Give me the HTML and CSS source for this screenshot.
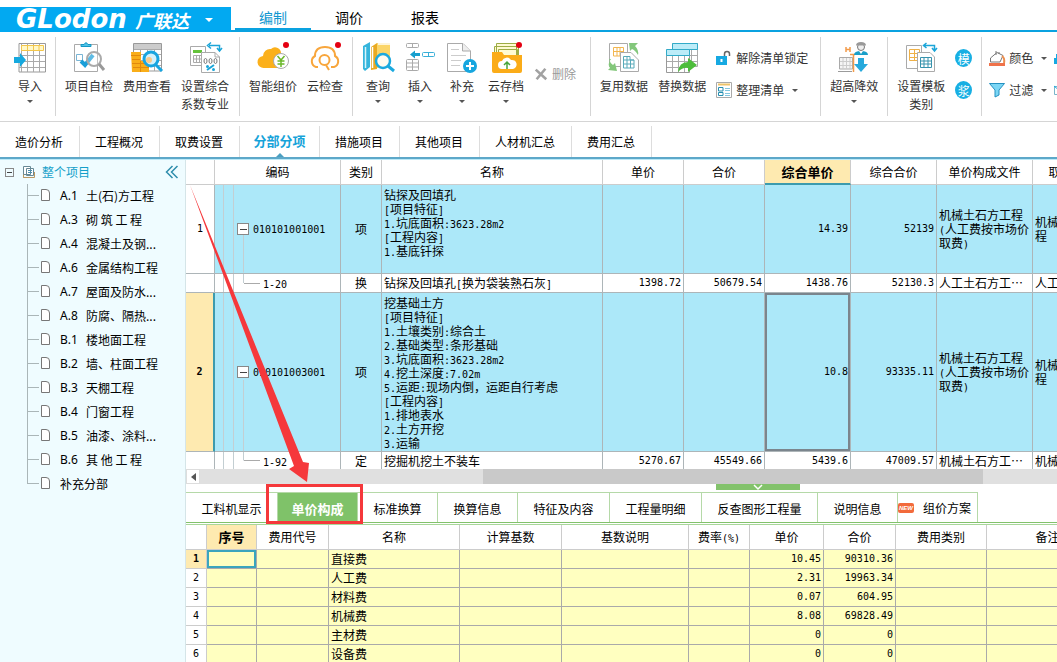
FILE: index.html
```html
<!DOCTYPE html>
<html lang="zh-CN">
<head>
<meta charset="utf-8">
<title>广联达计价</title>
<link rel="stylesheet" href="styles.css">
</head>
<body>
<header class="titlebar">
  <button class="brand"><span class="brand-en">GLodon</span><span class="brand-cn">广联达</span><i class="caret light"></i></button>
  <nav class="menus">
    <a class="menu active" href="#edit">编制</a>
    <a class="menu" href="#adjust">调价</a>
    <a class="menu" href="#report">报表</a>
  </nav>
</header>

<div class="ribbon">
  <div class="group first">
    <button class="tool">
      <svg viewBox="0 0 32 32"><path d="M5 2.500H31.500V31H5Z" fill="#fff" stroke="#999"/><path d="M7.500 3V31M13.500 3V31M19.500 3V31M25.500 3V31M5 14.500H31M5 20.500H31M5 26.500H31" stroke="#aaa" fill="none"/><path d="M7.500 4.500H29.500V9.500H7.500ZM13.500 4.500V9.500M19.500 4.500V9.500M25 4.500V9.500" fill="#fff8c8" stroke="#f3c64a"/><path d="M0 16h6v-4l6 7-6 7v-4H0z" fill="#16a9df"/></svg>
      <span>导入</span><i class="caret"></i></button>
  </div>
  <div class="group roomy">
    <button class="tool">
      <svg viewBox="0 0 32 32"><path d="M1.500 3.500H24.500V30.500H1.500Z" fill="#fff" stroke="#aaa"/><path d="M8 5.500V3.500H11Q13 0 15 3.500H18V5.500Z" fill="#4ec3e8" stroke="#1497c4"/><path d="M3.500 13.500H9.500V19.500H3.500Z" fill="none" stroke="#79b5d5"/><path d="M8 20l4 4 8-10" fill="none" stroke="#199ed8" stroke-width="4"/><circle cx="21" cy="18" r="7" fill="#fff" fill-opacity=".3" stroke="#aaa" stroke-width="2"/><path d="M26 23l5 6" stroke="#999" stroke-width="3"/></svg>
      <span>项目自检</span></button>
    <button class="tool">
      <svg viewBox="0 0 32 32"><path d="M2.500 2.500H30.500V30H2.500Z" fill="#fff" stroke="#999"/><path d="M3 3H30V8H3Z" fill="#ccc"/><path d="M3 8.500H30M3 13.500H30M3 19.500H30M3 24.500H30M9.500 8V30M16.500 8V30M23.500 8V30" stroke="#aaa"/><path d="M0 11h10v9h8v11H1z" fill="#f9ae19"/><path d="M0 14.500H10M1 18.500H9M1 22.500H17M2 26.500H18M9.500 20V31" stroke="#e1890d"/><circle cx="20" cy="18" r="7" fill="#d4f1fb" stroke="#18a5e0" stroke-width="3"/><circle cx="18" cy="19" r="3" fill="#f7c98c"/><path d="M25 24l6 6" stroke="#18a5e0" stroke-width="3"/></svg>
      <span>费用查看</span></button>
    <button class="tool">
      <svg viewBox="0 0 32 32"><path d="M1.500 5.500H16.500V24.500H1.500Z" fill="#fff" stroke="#aaa"/><path d="M4 9H13V12H4Z" fill="#64c33b"/><path d="M4.500 14.500H13.500V21.500H4.500ZM4.500 18H13.500M7.500 14.500V21.500M10.500 14.500V21.500" fill="none" stroke="#aaa"/><path d="M12.500 11.500H26L30.500 16V31.500H12.500Z" fill="#fff" stroke="#aaa"/><path d="M26 11.500V16H30.500" fill="none" stroke="#aaa"/><g fill="none" stroke="#777"><ellipse cx="16.500" cy="20" rx="1.500" ry="2.500"/><ellipse cx="21.500" cy="20" rx="1.500" ry="2.500"/><ellipse cx="26.500" cy="20" rx="1.500" ry="2.500"/></g><path d="M18 29l7-5" stroke="#1ba5d8" stroke-width="2"/><circle cx="18.500" cy="25.500" r="1.500" fill="#1ba5d8"/><circle cx="24.500" cy="28.500" r="1.500" fill="#1ba5d8"/><path d="M20 4.500H30.500V9M22 1.500L18.500 4.500L22 7.500M28 7L30.500 10L33 7" fill="none" stroke="#1ba5d8" stroke-width="1.500"/></svg>
      <span>设置综合<br>系数专业</span></button>
  </div>
  <div class="group">
    <button class="tool">
      <svg viewBox="0 0 32 32"><path d="M7 27a6 6 0 0 1-1-12 7 7 0 0 1 8-7 6 6 0 0 1 10 5 8 8 0 0 1 3 14z" fill="#fbb01b"/><circle cx="24" cy="20" r="7.500" fill="#fff" stroke="#aaa"/><path d="M20.500 15l3.500 4 3.500-4M24 19v7M20.500 20h7M20.500 23h7" fill="none" stroke="#6bb82b" stroke-width="1.500"/><circle cx="29" cy="4" r="3" fill="#e40012"/></svg>
      <span>智能组价</span></button>
    <button class="tool">
      <svg viewBox="0 0 32 32"><path d="M9 26H7a6 6 0 0 1-1-11c0-6 4-9 10-9s10 3 10 9a6 6 0 0 1-1 11h-3" fill="none" stroke="#f8a63c" stroke-width="2"/><circle cx="15.500" cy="19" r="5" fill="none" stroke="#f8a63c" stroke-width="2"/><path d="M17 24l3 5" stroke="#f8a63c" stroke-width="2"/><circle cx="29" cy="4" r="3" fill="#e40012"/></svg>
      <span>云检查</span></button>
  </div>
  <div class="group">
    <button class="tool">
      <svg viewBox="0 0 32 32"><path d="M1 5L8 1V26L3 30L1 28Z" fill="#35b5dc"/><path d="M3.500 6V27" stroke="#d7f5fc" stroke-width="1.500"/><path d="M9 6L15 2V28L9 29Z" fill="#e9aa22"/><path d="M15 2H28V27H15Z" fill="#fbd568"/><path d="M10.500 6V27M16 3H28" stroke="#fff" stroke-width="1.500"/><circle cx="21" cy="20" r="7" fill="#fff" fill-opacity=".9" stroke="#1ba9df" stroke-width="2.500"/><path d="M26 25l6 5" stroke="#1ba9df" stroke-width="3"/></svg>
      <span>查询</span><i class="caret"></i></button>
    <button class="tool">
      <svg viewBox="0 0 32 32"><g fill="#fff" stroke="#aaa"><rect x="2.500" y="2.500" width="12" height="4" rx="1"/><path d="M8.500 2.500V6.500"/><rect x="2.500" y="18.500" width="12" height="11" rx="1"/><path d="M8.500 18.500V29.500M2.500 22H14.500M2.500 26H14.500"/></g><rect x="18.500" y="11.500" width="12" height="4" rx="1" fill="#fff" stroke="#39afd8"/><path d="M24.500 11V16" stroke="#39afd8"/><path d="M6 13.500l5-4v2.500h5v3h-5v2.500z" fill="#169fce"/></svg>
      <span>插入</span><i class="caret"></i></button>
    <button class="tool">
      <svg viewBox="0 0 32 32"><path d="M1.500 2.500H17L24.500 10V30.500H1.500Z" fill="#fff" stroke="#aaa"/><path d="M16.500 2.500V10H24.500" fill="#eee" stroke="#aaa"/><path d="M5 8.500H13M5 14.500H20M5 19.500H15M5 24.500H14" stroke="#ccc"/><circle cx="24" cy="25" r="7" fill="#16a6df"/><path d="M20 25H28M24 21V29" stroke="#fff" stroke-width="2"/></svg>
      <span>补充</span><i class="caret"></i></button>
    <button class="tool">
      <svg viewBox="0 0 32 32"><path d="M6.500 18V2.500H26.500V18M4.500 18V5.500H28.500V18M8.500 18V8.500H27.500V18" fill="#fffad2" stroke="#9dac45"/><path d="M2 11H12L14 14H32V30Q32 32 30 32H4Q2 32 2 30Z" fill="#fbac18"/><path d="M12 28a4 4 0 0 1 0-8 5 5 0 0 1 9-1 4 4 0 0 1 2 9z" fill="#fff"/><path d="M17 28V21M14 24l3-3 3 3" fill="none" stroke="#48a53b" stroke-width="1.500"/><circle cx="29" cy="4" r="3" fill="#e40012"/></svg>
      <span>云存档</span><i class="caret"></i></button>
    <button class="line disabled" disabled>
      <svg viewBox="0 0 16 16"><path d="M2 3l12 11M13 2L3 14" stroke="#a2a2a2" stroke-width="3"/></svg><span>删除</span></button>
  </div>
  <div class="group wide">
    <button class="tool">
      <svg viewBox="0 0 32 32"><path d="M1.500 2.500H19.500V25.500H1.500Z" fill="#fff" stroke="#aaa"/><path d="M5.500 6.500H15.500V15H5.500ZM5.500 10.500H15.500M9 6.500V15M12 6.500V15" fill="none" stroke="#f2b64f"/><path d="M12.500 11.500H23L30.500 19V30.500H12.500Z" fill="#fff" stroke="#aaa"/><path d="M15.500 15.500H22V19H26V27H15.500ZM15.500 19H26M15.500 23H26M19 15.500V27M22.500 19V27" fill="none" stroke="#59aab9"/><path d="M21 2h9l-3 3q4 4 3 9-3-5-6-6l-2 2zM1 18q1 4 4 6l2-2 2 8-9-1 2-2q-3-4 1-9" fill="#83c77b"/></svg>
      <span>复用数据</span></button>
    <button class="tool">
      <svg viewBox="0 0 32 32"><path d="M6.500 2.500H31.500V25.500H6.500Z" fill="#fff" stroke="#aaa"/><path d="M25.500 8V26M19.500 8V26M8 14.500H31M8 20.500H31" stroke="#aaa"/><path d="M6.500 2.500H31.500V8.500H6.500Z" fill="#bcecf8" stroke="#32abc8"/><path d="M.500 9H23.500V31.500H.500Z" fill="#fff" stroke="#999"/><path d="M6.500 14V31M12.500 14V31M18.500 14V31M1 20.500H24M1 26.500H24" stroke="#aaa"/><path d="M.500 8.500H23.500V14.500H.500Z" fill="#bcecf8" stroke="#32abc8"/><path d="M12 31q1-10 10-10v-4l9 7-9 7v-4q-5-1-10 4z" fill="#4dbd3b"/></svg>
      <span>替换数据</span></button>
    <div class="stack">
      <button class="line"><svg viewBox="0 0 16 16"><path d="M0 6h11v9H0z" fill="#16a9e2"/><path d="M8.500 6V4q0-2.500 2.500-2.500T13.500 4v2" fill="none" stroke="#666" stroke-width="1.500"/><path d="M5.500 9v3" stroke="#fff" stroke-width="2"/></svg><span>解除清单锁定</span></button>
      <button class="line"><svg viewBox="0 0 16 16"><path d="M.500.500H15.500V15.500H.500Z" fill="#fff" stroke="#aaa"/><path d="M2 2.500H14" stroke="#edc36a" stroke-width="2"/><path d="M2.500 5.500H7V9H2.500ZM2.500 10.500H7V13.500H2.500Z" fill="#fff" stroke="#278eb0"/><path d="M9 6.500H14M9 8.500H14M9 11.500H14M9 13.500H14" stroke="#82c6df"/></svg><span>整理清单</span><i class="caret beside"></i></button>
    </div>
  </div>
  <div class="group">
    <button class="tool">
      <svg viewBox="0 0 32 32"><path d="M1.500 16.500H14.500V28H1.500Z" fill="#f5f5f5" stroke="#aaa"/><path d="M5 17V28M8.500 17V28M12 17V28M2 20.500H14M2 24.500H14" stroke="#ccc"/><path d="M0 30.500H14" stroke="#9b9b9b"/><path d="M8 6V11M12 6V11M8 8.500H12M12 13.500H17M15.500 13V31" fill="none" stroke="#f29b4a" stroke-width="1.500"/><circle cx="23" cy="6" r="3.500" fill="#eee" stroke="#777"/><path d="M18 4.500Q18 1 23 1T28 4.500Z" fill="#999"/><path d="M16 14q0-4 7-4t7 4z" fill="#199fc9"/><path d="M21 10l2 3 2-3" fill="#fff"/><path d="M20 17h6v6h4l-7 8-7-8h4z" fill="#26a9dc"/></svg>
      <span>超高降效</span><i class="caret"></i></button>
  </div>
  <div class="group">
    <button class="tool">
      <svg viewBox="0 0 32 32"><path d="M1.500 4.500H16.500V27.500H1.500Z" fill="#fff" stroke="#aaa"/><path d="M4.500 8.500H14.500V19.500H4.500ZM4.500 12.500H14M4.500 16.500H14M9.500 8.500V19.500" fill="none" stroke="#efb148"/><path d="M12.500 11.500H25L29.500 16V30.500H12.500Z" fill="#fff" stroke="#aaa"/><path d="M15.500 16.500H26.500V26.500H15.500ZM15.500 20H26.500M15.500 23H26.500M19 16.500V26.500M23 16.500V26.500" fill="none" stroke="#3793ad"/><path d="M19 4.500H29.500V9M21.500 2L18.500 4.500L21.500 7M27 7L29.500 10L32 7" fill="none" stroke="#1ba5d8" stroke-width="1.500"/></svg>
      <span>设置模板<br>类别</span></button>
    <div class="stack"><button class="round">模</button><button class="round">浆</button></div>
  </div>
  <div class="group last">
    <div class="stack">
      <button class="line"><svg viewBox="0 0 16 16"><path d="M1.500 12V8L8 2.500L14 5.500L11 12Z" fill="#fff" stroke="#777"/><path d="M7 5V1M10 4V2" stroke="#777"/><path d="M13 6q3 2 2 7" fill="none" stroke="#ec8d4d" stroke-width="2"/><path d="M0 13H16V16H0Z" fill="#ef724a"/></svg><span>颜色</span><i class="caret beside"></i></button>
      <button class="line"><svg viewBox="0 0 16 16"><path d="M.500 1.500H15.500L10 8V13L6 15V8Z" fill="#7bd6f5" stroke="#2591c1"/></svg><span>过滤</span><i class="caret beside"></i></button>
    </div>
    <div class="stack">
      <button class="line" aria-label="查找"><svg viewBox="0 0 16 16"><path d="M0 8h2V4h10v10H0z" fill="#16a9e2"/></svg></button>
      <button class="line" aria-label="其他"><svg viewBox="0 0 16 16"><path d="M.500 4.500H15.500V12.500H.500Z" fill="#fff" stroke="#7bb5ca"/><path d="M0 4l6 5" stroke="#16a9e2"/></svg></button>
    </div>
  </div>
</div>

<nav class="tabs">
  <a href="#t1">造价分析</a><a href="#t2">工程概况</a><a href="#t3">取费设置</a><a class="active" href="#t4">分部分项</a><a href="#t5">措施项目</a><a href="#t6">其他项目</a><a href="#t7">人材机汇总</a><a href="#t8">费用汇总</a>
</nav>

<div class="work">
  <aside class="side">
    <div class="root">
      <button class="toggle" aria-label="折叠"></button>
      <svg class="root-icon" viewBox="0 0 14 14"><path d="M1.500 12.500V1.500H8.500V9.500H1.500M4.500 3.500H11.500V10.500H4.500Z" fill="#fff" stroke="#678995"/><path d="M6 5.500H10M6 7.500H10" stroke="#488fb0"/><path d="M1.500 9.500V12.500H12.500V7" fill="none" stroke="#bc9862"/></svg>
      <a href="#all">整个项目</a>
      <button class="fold" aria-label="收起"><svg viewBox="0 0 14 14"><path d="M7.500 1L1.500 7L7.500 13M12.500 1L6.500 7L12.500 13" fill="none" stroke="#2e8dac" stroke-width="1.500"/></svg></button>
    </div>
    <ul class="tree">
      <li><a href="#a1"><i class="doc"></i><b>A.1</b>土(石)方工程</a></li>
      <li><a href="#a3"><i class="doc"></i><b>A.3</b>砌 筑 工 程</a></li>
      <li><a href="#a4"><i class="doc"></i><b>A.4</b>混凝土及钢...</a></li>
      <li><a href="#a6"><i class="doc"></i><b>A.6</b>金属结构工程</a></li>
      <li><a href="#a7"><i class="doc"></i><b>A.7</b>屋面及防水...</a></li>
      <li><a href="#a8"><i class="doc"></i><b>A.8</b>防腐、隔热...</a></li>
      <li><a href="#b1"><i class="doc"></i><b>B.1</b>楼地面工程</a></li>
      <li><a href="#b2"><i class="doc"></i><b>B.2</b>墙、柱面工程</a></li>
      <li><a href="#b3"><i class="doc"></i><b>B.3</b>天棚工程</a></li>
      <li><a href="#b4"><i class="doc"></i><b>B.4</b>门窗工程</a></li>
      <li><a href="#b5"><i class="doc"></i><b>B.5</b>油漆、涂料...</a></li>
      <li><a href="#b6"><i class="doc"></i><b>B.6</b>其 他 工 程</a></li>
      <li><a href="#bc"><i class="doc"></i>补充分部</a></li>
    </ul>
  </aside>

  <main class="main">
    <div class="clip">
    <table class="grid bill">
      <colgroup><col class="w29"><col class="w126"><col class="w41"><col class="w221"><col class="w81"><col class="w81"><col class="w86"><col class="w86"><col class="w96"><col class="w80"></colgroup>
      <thead><tr><th></th><th>编码</th><th>类别</th><th>名称</th><th>单价</th><th>合价</th><th class="hot">综合单价</th><th>综合合价</th><th>单价构成文件</th><th>取费专业</th></tr></thead>
      <tbody>
        <tr class="item one"><td class="no">1</td><td class="code"><div><button class="toggle" aria-label="折叠"></button><span class="n">010101001001</span></div></td><td class="mid">项</td>
          <td class="desc">钻探及回填孔<br><span class="n">[</span>项目特征<span class="n">]</span><br><span class="n">1.</span>坑底面积<span class="n">:3623.28m2</span><br><span class="n">[</span>工程内容<span class="n">]</span><br><span class="n">1.</span>基底钎探</td>
          <td class="num"></td><td class="num"></td><td class="num">14.39</td><td class="num">52139</td><td>机械土石方工程<br><span class="n">(</span>人工费按市场价<br>取费<span class="n">)</span></td><td>机械土石方工<br>程</td></tr>
        <tr class="sub"><td class="no"></td><td class="leaf"><span class="n">1-20</span></td><td class="mid">换</td><td>钻探及回填孔<span class="n">[</span>换为袋装熟石灰<span class="n">]</span></td><td class="num">1398.72</td><td class="num">50679.54</td><td class="num">1438.76</td><td class="num">52130.3</td><td>人工土石方工⋯</td><td>人工土石⋯</td></tr>
        <tr class="item two"><td class="no current">2</td><td class="code"><div><button class="toggle" aria-label="折叠"></button><span class="n">010101003001</span></div></td><td class="mid">项</td>
          <td class="desc">挖基础土方<br><span class="n">[</span>项目特征<span class="n">]</span><br><span class="n">1.</span>土壤类别<span class="n">:</span>综合土<br><span class="n">2.</span>基础类型<span class="n">:</span>条形基础<br><span class="n">3.</span>坑底面积<span class="n">:3623.28m2</span><br><span class="n">4.</span>挖土深度<span class="n">:7.02m</span><br><span class="n">5.</span>运距<span class="n">:</span>现场内倒，运距自行考虑<br><span class="n">[</span>工程内容<span class="n">]</span><br><span class="n">1.</span>排地表水<br><span class="n">2.</span>土方开挖<br><span class="n">3.</span>运输</td>
          <td class="num"></td><td class="num"></td><td class="num picked">10.8</td><td class="num">93335.11</td><td>机械土石方工程<br><span class="n">(</span>人工费按市场价<br>取费<span class="n">)</span></td><td>机械土石方工<br>程</td></tr>
        <tr class="sub end"><td class="no"></td><td class="leaf"><span class="n">1-92</span></td><td class="mid">定</td><td>挖掘机挖土不装车</td><td class="num">5270.67</td><td class="num">45549.66</td><td class="num">5439.6</td><td class="num">47009.57</td><td>机械土石方工⋯</td><td>机械土石⋯</td></tr>
      </tbody>
    </table>
    </div>
    <div class="scroll"><button class="scroll-left" aria-label="向左"></button><span class="before"></span><span class="thumb"></span><span class="after"></span></div>
    <div class="split"><button class="handle" aria-label="收起下方面板"><svg viewBox="0 0 12 6"><path d="M2 1L6 5L10 1" fill="none" stroke="#fff" stroke-width="1.500"/></svg></button></div>
    <nav class="subtabs">
      <a class="mid-tab" href="#s1">工料机显示</a><a class="active" href="#s2">单价构成</a><a href="#s3">标准换算</a><a href="#s4">换算信息</a><a class="mid-tab" href="#s5">特征及内容</a><a class="mid-tab" href="#s6">工程量明细</a><a class="long-tab" href="#s7">反查图形工程量</a><a href="#s8">说明信息</a><a class="new-tab" href="#s9"><em>NEW</em>组价方案</a>
    </nav>
    <div class="clip lower">
    <table class="grid fees">
      <colgroup><col class="w21"><col class="w50"><col class="w72"><col class="w131"><col class="w102"><col class="w127"><col class="w61"><col class="w74"><col class="w72"><col class="w91"><col class="w122"></colgroup>
      <thead><tr><th></th><th class="hot">序号</th><th>费用代号</th><th>名称</th><th>计算基数</th><th>基数说明</th><th>费率<span class="n">(%)</span></th><th>单价</th><th>合价</th><th>费用类别</th><th>备注</th></tr></thead>
      <tbody>
        <tr><td class="no current">1</td><td class="focus"></td><td></td><td>直接费</td><td></td><td></td><td></td><td class="num">10.45</td><td class="num">90310.36</td><td></td><td></td></tr>
        <tr><td class="no">2</td><td></td><td></td><td>人工费</td><td></td><td></td><td></td><td class="num">2.31</td><td class="num">19963.34</td><td></td><td></td></tr>
        <tr><td class="no">3</td><td></td><td></td><td>材料费</td><td></td><td></td><td></td><td class="num">0.07</td><td class="num">604.95</td><td></td><td></td></tr>
        <tr><td class="no">4</td><td></td><td></td><td>机械费</td><td></td><td></td><td></td><td class="num">8.08</td><td class="num">69828.49</td><td></td><td></td></tr>
        <tr><td class="no">5</td><td></td><td></td><td>主材费</td><td></td><td></td><td></td><td class="num">0</td><td class="num">0</td><td></td><td></td></tr>
        <tr><td class="no">6</td><td></td><td></td><td>设备费</td><td></td><td></td><td></td><td class="num">0</td><td class="num">0</td><td></td><td></td></tr>
      </tbody>
    </table>
    </div>
    <svg class="callout" viewBox="0 0 180 366" aria-hidden="true"><path d="M4 25L117 302L123 303L121 322L103 309L108 306Z" fill="#f5383b"/><rect x="81.500" y="325.500" width="94" height="37" fill="none" stroke="#f5383b" stroke-width="3"/></svg>
  </main>
</div>
</body>
</html>
```
FILE: styles.css
```css
* { box-sizing: border-box; }
body {
  margin: 0;
  height: 100vh;
  display: flex;
  flex-direction: column;
  overflow: hidden;
  background: #fff;
  color: #000;
  font: 12px/18px "Noto Sans CJK SC", "Noto Sans", sans-serif;
}
a { color: inherit; text-decoration: none; }
button { border: 0; padding: 0; background: none; color: inherit; font: inherit; }
svg { display: block; overflow: visible; flex: none; }

.titlebar {
  display: flex;
  flex: none;
  height: 32px;
  padding-top: 7px;
  background: linear-gradient(#0aa2e0, #0aa2e0) 0 100% / 100% 2px no-repeat;
}
.brand {
  display: flex;
  align-items: center;
  width: 231px;
  padding-left: 16px;
  background: #02a9f1;
  color: #fff;
  text-align: left;
  white-space: nowrap;
}
.brand-en { width: 119px; font: italic bold 26px/25px "DejaVu Sans", sans-serif; }
.brand-cn { width: 70px; font-size: 18px; font-weight: bold; font-style: italic; line-height: 24px; }
.menus { display: flex; padding-left: 4px; }
.menu { width: 76px; text-align: center; font-size: 14px; line-height: 21px; }
.menu.active { color: #1197d0; border-bottom: 4px solid #0aa2e0; }
.caret { display: block; width: 0; height: 0; border: 3px solid transparent; border-top-color: #555; border-bottom: 0; }
.caret.light { border-width: 4px; border-top-color: #fff; border-bottom: 0; }
.caret.beside { margin-left: 4px; }

.ribbon { display: flex; flex: none; height: 90px; padding: 5px 0; border-bottom: 1px solid #d5d5d5; overflow: hidden; color: #333; }
.group { display: flex; flex: none; gap: 10px; padding: 4px 9px 0; border-right: 1px solid #d5d5d5; }
.group.first { padding-left: 14px; }
.group.roomy { padding-right: 10px; }
.group.wide { padding-right: 12px; }
.group.last { gap: 7px; border-right: 0; padding-left: 7px; }
.tool { display: flex; flex-direction: column; align-items: center; min-width: 32px; white-space: nowrap; }
.tool svg { width: 32px; height: 32px; margin-bottom: 4px; }
.tool .caret { margin-top: 5px; }
.line { display: flex; align-items: center; gap: 4px; height: 18px; white-space: nowrap; }
.line svg { width: 16px; height: 16px; }
.disabled { margin-top: 24px; padding-right: 5px; color: #999; }
.disabled svg { width: 14px; height: 14px; }
.stack { display: flex; flex-direction: column; gap: 14px; padding-top: 8px; }
.round { width: 17px; height: 18px; border-radius: 50%; background: #18afe3; color: #fff; line-height: 17px; }

.tabs { display: flex; flex: none; height: 37px; padding-top: 4px; border-bottom: 2px solid #5da8c9; }
.tabs a { padding: 0 16px 0 15px; border-right: 1px solid #ddd; line-height: 32px; }
.tabs .active {
  display: flex;
  flex-direction: column;
  align-items: center;
  width: 80px;
  padding: 0;
  color: #16a3d9;
  font-size: 13px;
  font-weight: bold;
  line-height: 30px;
  white-space: nowrap;
}
.tabs .active::after { content: ""; margin-top: -3px; border: 4px solid transparent; border-top: 0; border-bottom-color: #4b9fc1; }

.work { display: flex; flex: 1; min-height: 0; border-top: 1px solid #bdeaf8; }
.side { flex: none; width: 186px; background: #effcff; border-right: 1px solid #d5e5e8; }
.root { display: flex; align-items: center; height: 24px; padding: 0 6px 0 5px; color: #149fc9; }
.toggle { flex: none; width: 9px; height: 9px; border: 1px solid #888; background: linear-gradient(#444, #444) 50% / 5px 1px no-repeat; }
.root-icon { width: 14px; height: 14px; margin: 0 6px 0 8px; }
.fold { margin-left: auto; }
.fold svg { width: 14px; height: 14px; }
.tree { margin: 0; padding: 0 0 0 27px; list-style: none; }
.tree li { background: linear-gradient(#aab6b8, #aab6b8) 0 0 / 1px 100% no-repeat, linear-gradient(#aab6b8, #aab6b8) 0 11px / 12px 1px no-repeat; }
.tree li:last-child { background-size: 1px 12px, 12px 1px; }
.tree a { display: flex; height: 24px; padding-left: 14px; line-height: 24px; white-space: pre; }
.tree b { width: 26px; font-weight: normal; font-family: "Noto Sans", sans-serif; }
.doc { width: 9px; height: 12px; margin: 5px 10px 0 0; border: 1px solid #777; border-top-right-radius: 4px; background: #fff; }

.main { position: relative; display: flex; flex-direction: column; flex: 1; min-width: 0; }
.clip { overflow: hidden; flex: none; }
.lower { flex: 1; min-height: 0; margin-top: 1px; border-top: 1px solid #a8d79a; }
.grid { table-layout: fixed; border-collapse: separate; border-spacing: 0; line-height: 14px; }
.bill { width: 927px; }
.fees { width: 923px; }
.w21 { width: 21px; } .w29 { width: 29px; } .w41 { width: 41px; } .w50 { width: 50px; }
.w61 { width: 61px; } .w72 { width: 72px; } .w74 { width: 74px; } .w80 { width: 80px; }
.w81 { width: 81px; } .w86 { width: 86px; } .w91 { width: 91px; } .w96 { width: 96px; }
.w102 { width: 102px; } .w122 { width: 122px; } .w126 { width: 126px; } .w127 { width: 127px; }
.w131 { width: 131px; } .w221 { width: 221px; }
.grid th, .grid td { padding: 0 2px; border: solid #adb5b8; border-width: 0 1px 1px 0; white-space: nowrap; overflow: hidden; }
.grid th { height: 25px; font-weight: normal; border-color: #ccc; }
.grid .hot { background: #feeab0; font-weight: bold; font-size: 13px; }
.bill .hot { border-bottom: 2px solid #3c9bae; }
.n, .num { font-family: "DejaVu Sans Mono", monospace; font-size: 10px; }
.n { line-height: 1px; }
.num { line-height: 12px; }
.grid .num { text-align: right; padding-right: 2px; }
.grid .mid, .grid .no { text-align: center; }
.no { background: #fff; font-family: "DejaVu Sans Mono", monospace; font-size: 10px; }
.item td { background-color: #ace8f9; }
.item .no { background: #fff; }
.grid .no.current { background: #feeab0; font-weight: bold; }
.bill .current { border-right: 2px solid #3c9bae; }
.item .desc { vertical-align: top; padding-top: 3px; }
.one td { height: 89px; }
.two td { height: 159px; }
.sub td { height: 19px; }
.end td { height: 17px; border-bottom: 0; }
.code, .leaf { background-image: linear-gradient(#c3ced2, #c3ced2), linear-gradient(#c3ced2, #c3ced2), linear-gradient(#c3ced2, #c3ced2), linear-gradient(#aaa, #aaa); background-repeat: no-repeat; }
.code { background-position: 8px 0, 18px 0, 28px 100%, 0 0; background-size: 1px 100%, 1px 100%, 1px 45%, 0 0; }
.leaf { background-position: 8px 0, 18px 0, 28px 0, 29px 50%; background-size: 1px 100%, 1px 100%, 1px 50%, 16px 1px; }
.grid .code { padding-left: 22px; }
.grid .leaf { padding-left: 48px; }
.code div { display: flex; align-items: center; gap: 4px; }
.code .toggle { width: 12px; height: 12px; background-color: #fff; background-size: 7px 1px; }
.picked { box-shadow: inset 0 0 0 2px #7b858d; }
.fees td { height: 19px; background: #ffffc0; border-color: #aaa; }
.fees .no { background: #fff; border-color: #ccc; }
.fees .focus { box-shadow: inset 0 0 0 2px #3ba5bd; }

.scroll { display: flex; flex: none; height: 15px; background: #e0e0e0; }
.scroll-left { width: 14px; border: 1px solid #ddd; background: #fff; display: flex; align-items: center; justify-content: center; }
.scroll-left::before { content: ""; border: 4px solid transparent; border-left: 0; border-right: 5px solid #555; }
.before { flex: 283; }
.thumb { flex: 500; background: #c9c9c9; }
.after { flex: 74; }
.split { flex: none; height: 8px; padding-left: 530px; }
.handle { display: flex; justify-content: center; width: 84px; height: 6px; background: #82c26b; }
.handle svg { width: 12px; height: 6px; }
.subtabs { display: flex; flex: none; height: 31px; border-bottom: 1px solid #82c26b; }
.subtabs a { flex: none; width: 80px; border-right: 1px solid #b5d9a8; border-top: 1px solid #b5d9a8; text-align: center; line-height: 32px; white-space: nowrap; }
.subtabs .mid-tab { width: 92px; }
.subtabs .long-tab { width: 116px; }
.subtabs .active { background: #7fc269; color: #fff; font-weight: bold; font-size: 13px; }
.subtabs .new-tab { display: flex; align-items: center; gap: 9px; line-height: 18px; }
.new-tab em { width: 16px; height: 10px; border-radius: 2px; background: #f26a3b; color: #fff; font: italic bold 6px/10px "Liberation Sans", sans-serif; }

.callout { position: absolute; left: 0; top: 0; width: 180px; height: 366px; pointer-events: none; }
```
